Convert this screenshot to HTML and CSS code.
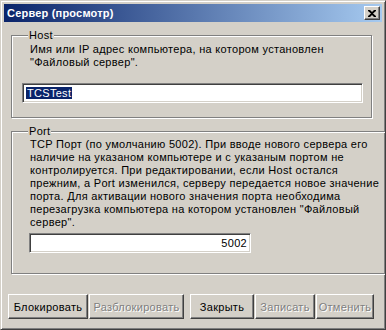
FILE: index.html
```html
<!DOCTYPE html>
<html lang="ru">
<head>
    <meta charset="UTF-8">
    <title>Сервер (просмотр)</title>
    <link rel="stylesheet" href="styles.css">
</head>
<body>
    <div class="janela">
        <div class="titulo">
            <span>Сервер (просмотр)</span>
            <div class="fechar">
                <svg width="8" height="7" viewBox="0 0 8 7">
                    <path d="M0 0h2l2 2 2-2h2v1L5 3.5 8 6v1H6L4 5 2 7H0V6l3-2.5L0 1z" fill="#000"/>
                </svg>
            </div>
        </div>

        <div class="conteudo">
            <!-- grupo Host -->
            <fieldset class="grupo grupo-host">
                <legend>Host</legend>
                <p class="texto">Имя или IP адрес компьютера, на котором установлен<br>"Файловый сервер".</p>
                <div class="campo campo-host"><span class="selecao">TCSTest</span></div>
            </fieldset>

            <!-- grupo Port -->
            <fieldset class="grupo grupo-port">
                <legend>Port</legend>
                <p class="texto texto-port">TCP Порт (по умолчанию 5002). При вводе нового сервера его<br>наличие на указаном компьютере и с указаным портом не<br>контролируется. При редактировании, если Host остался<br>прежним, а Port изменился, серверу передается новое значение<br>порта. Для активации нового значения порта необходима<br>перезагрузка компьютера на котором установлен "Файловый<br>сервер".</p>
                <div class="campo campo-port">5002</div>
            </fieldset>

            <div class="botoes">
                <button class="btn b1">Блокировать</button>
                <button class="btn b2" disabled>Разблокировать</button>
                <button class="btn b3">Закрыть</button>
                <button class="btn b4" disabled>Записать</button>
                <button class="btn b5" disabled>Отменить</button>
            </div>
        </div>
    </div>
</body>
</html>
```

FILE: styles.css
```css
* {
    margin: 0;
    padding: 0;
    box-sizing: border-box;
}

body {
    font-family: 'Liberation Sans', Arial, sans-serif;
    font-size: 11px;
    letter-spacing: 0.3px;
    color: #000;
    background-color: #d4d0c8;
}

/* Janela principal */
.janela {
    width: 386px;
    height: 330px;
    background-color: #d4d0c8;
    border: 1px solid;
    border-color: #d4d0c8 #404040 #404040 #d4d0c8;
    box-shadow: inset 1px 1px 0 #fff, inset -1px -1px 0 #808080;
    padding: 3px;
    display: flex;
    flex-direction: column;
    overflow: hidden;
}

.titulo {
    height: 18px;
    flex-shrink: 0;
    background: linear-gradient(to right, #0a246a, #a6caf0);
    color: #fff;
    font-weight: bold;
    letter-spacing: 0.2px;
    display: flex;
    align-items: center;
    justify-content: space-between;
    padding: 0 2px 0 3px;
}

.fechar {
    width: 16px;
    height: 14px;
    background-color: #d4d0c8;
    border: 1px solid;
    border-color: #fff #404040 #404040 #fff;
    box-shadow: inset -1px -1px 0 #808080;
    display: flex;
    align-items: center;
    justify-content: center;
}

.conteudo {
    padding-top: 7px;
}

/* Grupos */
.grupo {
    width: 360px;
    margin-left: 7px;
    border: 1px solid #808080;
    box-shadow: 1px 1px 0 #fff, inset 1px 1px 0 #fff;
    padding: 0 8px 14px 10px;
}

.grupo legend {
    margin-left: 6px;
    padding: 0 1px;
    line-height: 13px;
    background-color: #d4d0c8;
}

.grupo-port {
    margin-top: 7px;
    padding-bottom: 20px;
}

.texto {
    line-height: 13px;
    margin: 1px 0 0 8px;
    white-space: nowrap;
}

.texto-port {
    margin-top: 0;
}

.campo {
    height: 20px;
    background-color: #fff;
    border: 1px solid;
    border-color: #808080 #fff #fff #808080;
    box-shadow: inset 1px 1px 0 #404040, inset -1px -1px 0 #d4d0c8;
    padding: 2px 3px;
    line-height: 14px;
}

.campo-host {
    margin-top: 14px;
    width: 341px;
}

.selecao {
    background-color: #0a246a;
    color: #fff;
    padding: 0 1px;
}

.campo-port {
    margin: 4px 0 0 7px;
    width: 222px;
    text-align: right;
}

/* Botoes */
.botoes {
    display: flex;
    margin-top: 20px;
    padding-left: 4px;
}

.btn {
    height: 25px;
    font-family: inherit;
    font-size: 11px;
    letter-spacing: 0.3px;
    color: #000;
    background-color: #d4d0c8;
    border: 1px solid;
    border-color: #fff #404040 #404040 #fff;
    box-shadow: inset -1px -1px 0 #808080;
    margin-right: 1px;
}

.btn:disabled {
    color: #808080;
    text-shadow: 1px 1px 0 #fff;
}

.b1 { width: 80px; }
.b2 { width: 95px; }
.b3 { width: 64px; margin-left: 5px; }
.b4 { width: 60px; }
.b5 { width: 58px; }
```
